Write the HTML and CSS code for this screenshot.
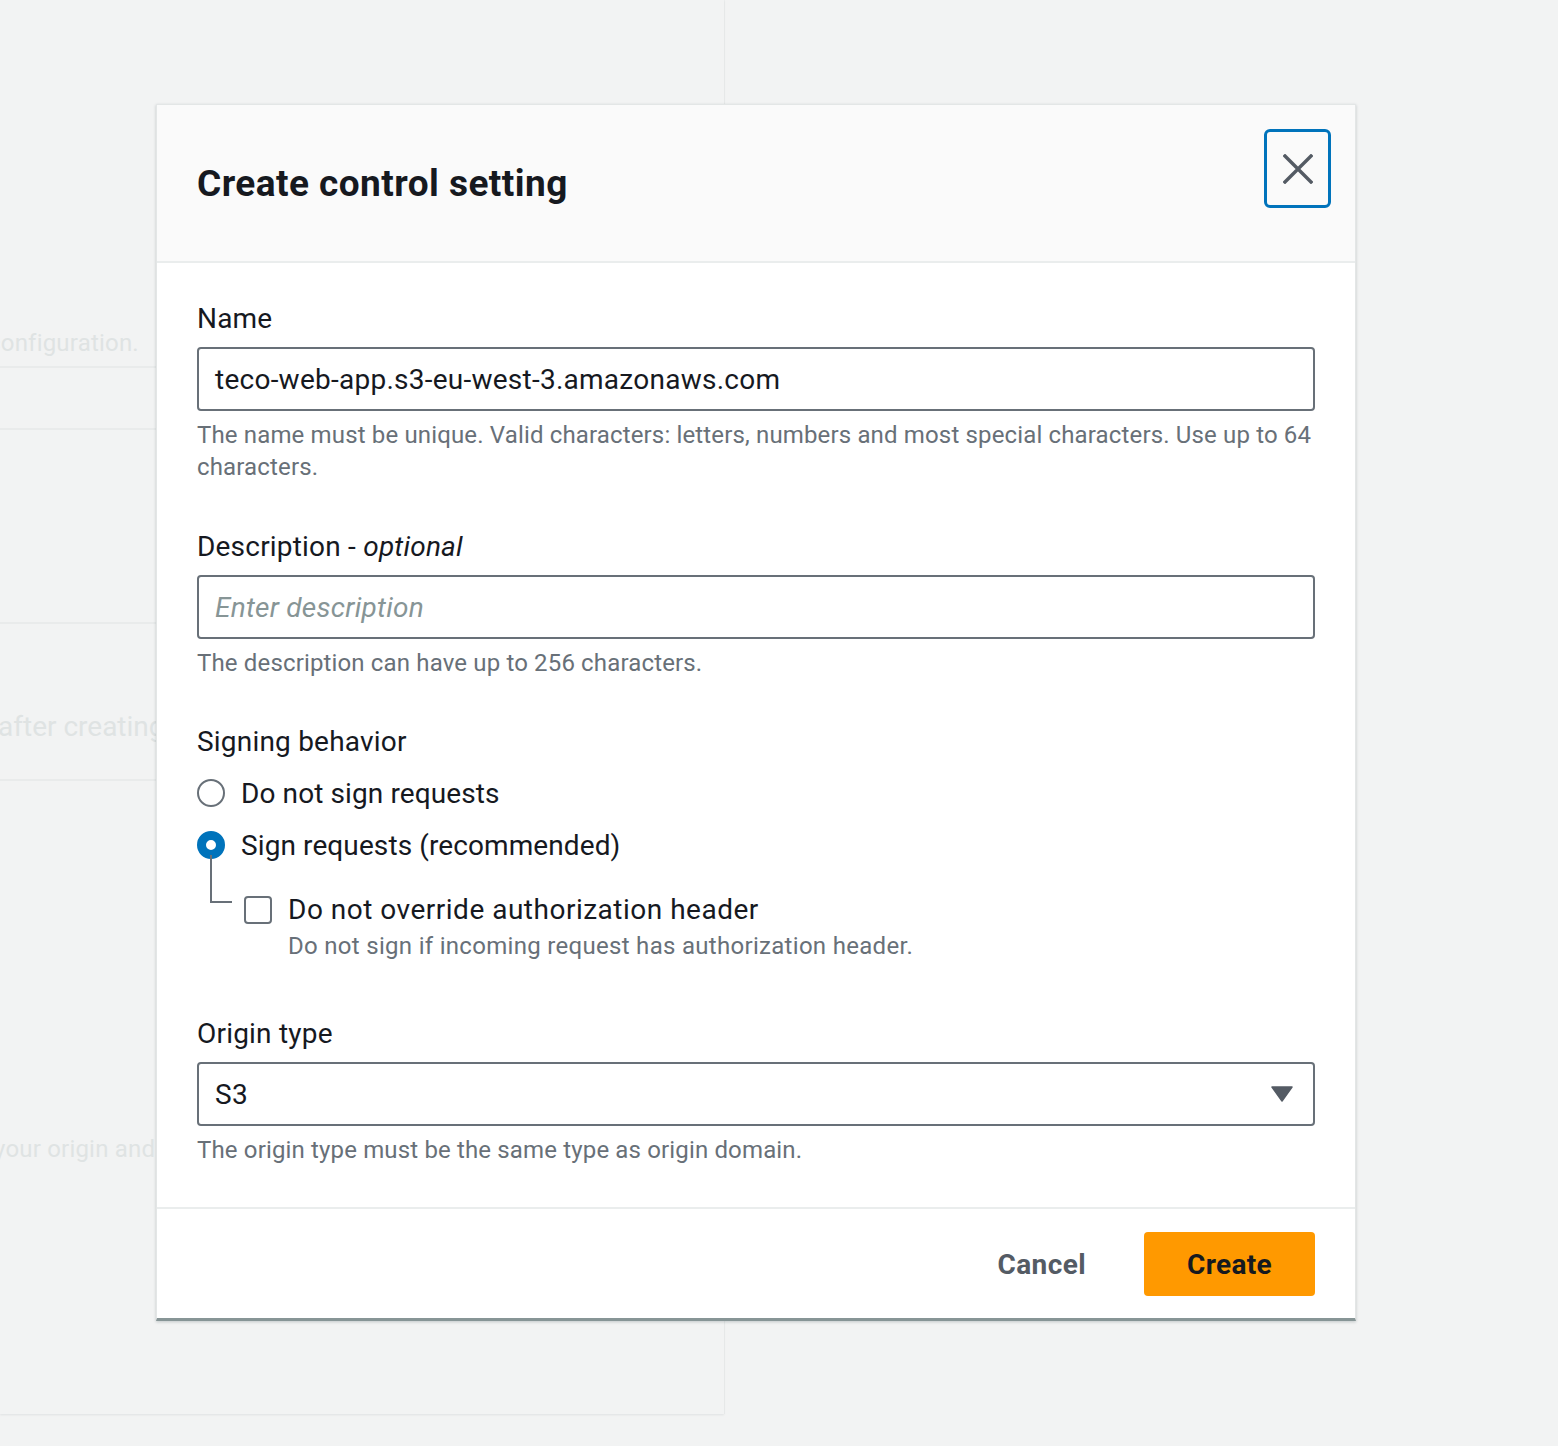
FILE: index.html
```html
<!DOCTYPE html>
<html lang="en">
<head>
<meta charset="utf-8">
<title>Create control setting</title>
<link rel="stylesheet" href="styles.css">
</head>
<body>
<div class="page">
  <div class="bg-card">
    <div class="bg-row bg-row-1"><span class="bg-text bg-text-1">configuration.</span></div>
    <div class="bg-row bg-row-2"></div>
    <div class="bg-row bg-row-3"></div>
    <div class="bg-row bg-row-4"><span class="bg-text bg-text-2">after creating</span></div>
    <div class="bg-row bg-row-5"><span class="bg-text bg-text-3">your origin and</span></div>
  </div>
</div>

<div class="modal" role="dialog" aria-labelledby="modal-title">
  <div class="modal-header">
    <h2 class="modal-title" id="modal-title">Create control setting</h2>
    <button class="close-btn" type="button" aria-label="Close">
      <svg width="30" height="30" viewBox="0 0 30 30" aria-hidden="true">
        <path d="M2 2 L28 28 M28 2 L2 28" stroke="#545b64" stroke-width="3.4" fill="none" stroke-linecap="square"/>
      </svg>
    </button>
  </div>

  <div class="modal-body">
    <div class="field">
      <div class="label">Name</div>
      <div class="input">teco-web-app.s3-eu-west-3.amazonaws.com</div>
      <div class="hint">The name must be unique. Valid characters: letters, numbers and most special characters. Use up to 64 characters.</div>
    </div>

    <div class="field field-gap">
      <div class="label">Description - <i>optional</i></div>
      <div class="input placeholder">Enter description</div>
      <div class="hint">The description can have up to 256 characters.</div>
    </div>

    <div class="field field-gap-sign">
      <div class="label">Signing behavior</div>
      <div class="radio-row first">
        <span class="radio"></span>
        <span class="radio-label">Do not sign requests</span>
      </div>
      <div class="radio-row">
        <span class="radio checked"></span>
        <span class="radio-label">Sign requests (recommended)</span>
      </div>
      <div class="sub-option">
        <span class="connector"></span>
        <div class="check-row">
          <span class="checkbox"></span>
          <div class="check-text">
            <div class="check-label">Do not override authorization header</div>
            <div class="check-desc">Do not sign if incoming request has authorization header.</div>
          </div>
        </div>
      </div>
    </div>

    <div class="field field-gap-lg">
      <div class="label">Origin type</div>
      <div class="input select">
        <span>S3</span>
        <svg class="caret" width="22" height="16" viewBox="0 0 22 16" aria-hidden="true">
          <path d="M1 1 H21 L11 15 Z" fill="#545b64" stroke="#545b64" stroke-width="1.5" stroke-linejoin="round"/>
        </svg>
      </div>
      <div class="hint">The origin type must be the same type as origin domain.</div>
    </div>
  </div>

  <div class="modal-footer">
    <button class="btn-link" type="button">Cancel</button>
    <button class="btn-primary" type="button">Create</button>
  </div>
</div>
</body>
</html>
```

FILE: styles.css
```css
* { box-sizing: border-box; }

html, body {
  margin: 0;
  padding: 0;
}

body {
  width: 1558px;
  height: 1446px;
  overflow: hidden;
  background: #f2f3f3;
  font-family: Roboto, "Liberation Sans", Arial, sans-serif;
  color: #16191f;
  position: relative;
}

.page {
  display: flex;
}

.bg-card {
  width: 724px;
  height: 1414px;
  background: #f2f3f3;
  box-shadow: 0 1px 2px rgba(0, 28, 36, 0.08), 1px 0 0 #eceeee;
  overflow: hidden;
  display: flex;
  flex-direction: column;
}

.bg-row {
  border-bottom: 2px solid #e9ebeb;
  display: flex;
  align-items: flex-end;
}

.bg-row-1 { height: 368px; padding-bottom: 7px; }
.bg-row-2 { height: 62px; }
.bg-row-3 { height: 194px; }
.bg-row-4 { height: 157px; padding-bottom: 36px; }
.bg-row-5 { height: 400px; border-bottom: none; padding-bottom: 16px; }

.bg-text {
  color: #dfe3e3;
  font-size: 24px;
  line-height: 32px;
  white-space: nowrap;
  letter-spacing: 0.2px;
}
.bg-text-1 { margin-left: -12px; }
.bg-text-2 { font-size: 28px; margin-left: -2px; letter-spacing: 0; }
.bg-text-3 { margin-left: -6px; }

/* Modal */
.modal {
  position: absolute;
  left: 156px;
  top: 104px;
  width: 1200px;
  height: 1217px;
  background: #ffffff;
  border: 1px solid #e3e6e6;
  border-bottom: 3px solid #879596;
  box-shadow: 0 1px 3px rgba(0, 28, 36, 0.2);
  display: flex;
  flex-direction: column;
}

.modal-header {
  height: 158px;
  background: #fafafa;
  border-bottom: 2px solid #eaeded;
  display: flex;
  justify-content: space-between;
  align-items: flex-start;
  padding: 24px 24px 0 40px;
}

.modal-title {
  margin: 33px 0 0 0;
  font-size: 37px;
  line-height: 44px;
  font-weight: 700;
  color: #16191f;
  letter-spacing: 0.45px;
}

.close-btn {
  width: 67px;
  height: 79px;
  border: 3px solid #0073bb;
  border-radius: 6px;
  background: #fafafa;
  display: flex;
  align-items: center;
  justify-content: center;
  padding: 0;
  margin-top: 0;
}

.modal-body {
  padding: 36px 40px 0 40px;
  flex: 1;
}

.label {
  font-size: 28px;
  line-height: 40px;
  color: #16191f;
  letter-spacing: 0.2px;
}
.label i { font-style: italic; }

.input {
  margin-top: 8px;
  height: 64px;
  border: 2px solid #687078;
  border-radius: 4px;
  padding: 0 16px;
  font-size: 28px;
  letter-spacing: 0.25px;
  display: flex;
  align-items: center;
  color: #16191f;
}

.input.placeholder {
  font-style: italic;
  color: #879596;
}

.hint {
  margin-top: 8px;
  font-size: 24px;
  line-height: 32px;
  color: #687078;
  letter-spacing: 0.15px;
}

.field-gap { margin-top: 44px; }
.field-gap-sign { margin-top: 43px; }
.field-gap-lg { margin-top: 52px; }

.radio-row {
  display: flex;
  align-items: center;
  gap: 16px;
  height: 40px;
  margin-top: 12px;
}
.radio-row.first { margin-top: 11px; }

.radio {
  width: 28px;
  height: 28px;
  border-radius: 50%;
  border: 2px solid #687078;
  background: #fff;
  flex: none;
}

.radio.checked {
  border: 9px solid #0073bb;
  background: #fff;
}

.radio-label {
  font-size: 28px;
  color: #16191f;
  letter-spacing: 0.1px;
}

.sub-option {
  display: flex;
}

.connector {
  width: 22px;
  height: 48px;
  margin-left: 13px;
  margin-top: -10px;
  border-left: 2px solid #687078;
  border-bottom: 2px solid #687078;
  flex: none;
}

.check-row {
  display: flex;
  gap: 16px;
  margin-left: 12px;
  margin-top: 25px;
}

.checkbox {
  width: 28px;
  height: 28px;
  border: 2px solid #687078;
  border-radius: 4px;
  background: #fff;
  flex: none;
  margin-top: 6px;
}

.check-label {
  font-size: 28px;
  line-height: 40px;
  color: #16191f;
  letter-spacing: 0.5px;
}

.check-desc {
  font-size: 24px;
  line-height: 32px;
  color: #687078;
  letter-spacing: 0.3px;
}

.select {
  justify-content: space-between;
  padding-right: 20px;
}

.caret { display: block; }

.modal-footer {
  border-top: 2px solid #eaeded;
  padding: 23px 40px 22px;
  display: flex;
  justify-content: flex-end;
  align-items: center;
  gap: 30px;
}

.btn-link {
  background: none;
  border: none;
  font-family: inherit;
  font-size: 28px;
  font-weight: 700;
  color: #545b64;
  padding: 0 28px;
  height: 64px;
  letter-spacing: 0.4px;
}

.btn-primary {
  font-family: inherit;
  width: 171px;
  height: 64px;
  background: #ff9900;
  border: none;
  border-radius: 4px;
  font-size: 28px;
  font-weight: 700;
  color: #16191f;
  letter-spacing: 0.3px;
}
```
